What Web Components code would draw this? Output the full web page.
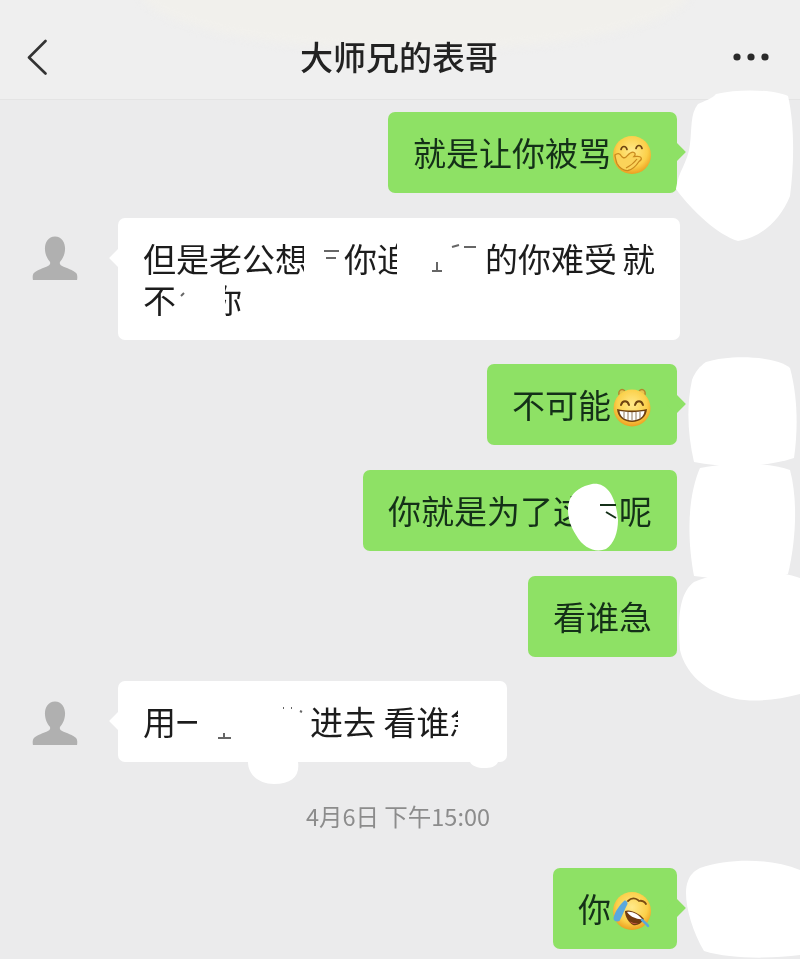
<!DOCTYPE html>
<html lang="zh">
<head>
<meta charset="utf-8">
<title>大师兄的表哥</title>
<style>
  html, body { margin: 0; background: #ebebeb; }
  body { font-family: "Noto Sans CJK SC", "Noto Sans", sans-serif; }
</style>
</head>
<body>
<chat-page>
  <chat-header slot="header">大师兄的表哥</chat-header>

  <chat-row side="right">
    <chat-bubble side="right">就是让你被骂<chat-emoji name="smirk"></chat-emoji></chat-bubble>
  </chat-row>

  <chat-row side="left" avatar-top="17">
    <chat-bubble side="left">但是老公想<span style="display:inline-block;width:36px"></span>你追<span style="display:inline-block;width:75px"></span>的你难受<span style="display:inline-block;width:5px"></span>就<br>不<span style="display:inline-block;width:33px"></span>你</chat-bubble>
  </chat-row>

  <chat-row side="right">
    <chat-bubble side="right">不可能<chat-emoji name="grin"></chat-emoji></chat-bubble>
  </chat-row>

  <chat-row side="right">
    <chat-bubble side="right" notail>你就是为了这<span style="display:inline-block;width:33px"></span>呢</chat-bubble>
  </chat-row>

  <chat-row side="right">
    <chat-bubble side="right" notail>看谁急</chat-bubble>
  </chat-row>

  <chat-row side="left" avatar-top="19">
    <chat-bubble side="left">用一<span style="display:inline-block;width:101px"></span>进去 看谁急</chat-bubble>
  </chat-row>

  <chat-time>4月6日 下午15:00</chat-time>

  <chat-row side="right">
    <chat-bubble side="right">你<chat-emoji name="laugh"></chat-emoji></chat-bubble>
  </chat-row>

  <chat-scribble slot="over"></chat-scribble>
</chat-page>

<script>
class ChatPage extends HTMLElement {
  constructor() {
    super();
    this.attachShadow({ mode: "open" });
    this.shadowRoot.innerHTML = /* html */`
    <style>
      :host {
        display: block;
        position: relative;
        width: 800px;
        height: 959px;
        overflow: hidden;
        background: #ebebec;
      }
      .list {
        display: flex;
        flex-direction: column;
        gap: 24.7px;
        padding-top: 12px;
      }
    </style>
    <slot name="header"></slot>
    <div class="list"><slot></slot></div>
    <slot name="over"></slot>
    `;
  }
}

class ChatHeader extends HTMLElement {
  constructor() {
    super();
    this.attachShadow({ mode: "open" });
    this.shadowRoot.innerHTML = /* html */`
    <style>
      :host {
        display: block;
        position: relative;
        height: 100px;
        box-sizing: border-box;
        border-bottom: 1px solid #e4e4e4;
        background: #efefef;
        overflow: hidden;
      }
      .glow {
        position: absolute;
        left: 140px;
        top: -70px;
        width: 550px;
        height: 120px;
        border-radius: 50%;
        background: #f1f0ec;
        filter: blur(4px);
      }
      .bar {
        position: relative;
        display: flex;
        align-items: center;
        justify-content: space-between;
        height: 100px;
        box-sizing: border-box;
        padding: 14px 31px 0 26px;
      }
      .title {
        position: absolute;
        left: 0;
        right: 2px;
        top: 32px;
        text-align: center;
        font-size: 33px;
        line-height: 48px;
        font-weight: 500;
        color: #222;
        filter: blur(.4px);
      }
      svg { display: block; }
    </style>
    <div class="glow"></div>
    <div class="bar">
      <svg width="22" height="36" viewBox="0 0 22 36"><path d="M19.500 2 3 18.500 19.500 34.500" fill="none" stroke="#333" stroke-width="2.600" stroke-linecap="round" stroke-linejoin="round"/></svg>
      <span class="title"><slot></slot></span>
      <svg width="36" height="8" viewBox="0 0 36 8"><circle cx="4" cy="4" r="3.600" fill="#2a2a2a"/><circle cx="18" cy="4" r="3.600" fill="#2a2a2a"/><circle cx="32" cy="4" r="3.600" fill="#2a2a2a"/></svg>
    </div>
    `;
  }
}

class ChatRow extends HTMLElement {
  constructor() {
    super();
    this.attachShadow({ mode: "open" });
  }

  connectedCallback() {
    const left = this.getAttribute("side") === "left";
    const top = this.getAttribute("avatar-top") || 17;
    this.shadowRoot.innerHTML = /* html */`
    <style>
      :host {
        display: flex;
        justify-content: ${left ? "flex-start" : "flex-end"};
        padding: ${left ? "0 121px 0 32px" : "0 123px 0 0"};
      }
      .avatar {
        flex: none;
        display: block;
        margin: ${top}px 40px 0 0;
        filter: blur(.5px);
      }
    </style>
    ${left ? `<svg class="avatar" width="46" height="47" viewBox="0 0 48 48"><path d="M24 1c7 0 10.500 6 10.500 12.500 0 6-2.500 11-5 13.500-1 1.500-.5 3.500 1.500 4.500 5 2.500 12 4.500 15 7.500 1.500 1.500 1.500 5 1 7.500H1c-.5-2.500-.5-6 1-7.500 3-3 10-5 15-7.500 2-1 2.500-3 1.500-4.500-2.500-2.500-5-7.500-5-13.500C13.500 7 17 1 24 1z" fill="#b0b0b0"/></svg>` : ""}
    <slot></slot>
    `;
  }
}

class ChatBubble extends HTMLElement {
  constructor() {
    super();
    this.attachShadow({ mode: "open" });
    this.shadowRoot.innerHTML = /* html */`
    <style>
      :host {
        display: block;
        position: relative;
        box-sizing: border-box;
        padding: 20px 25px;
        border-radius: 7px;
        font-size: 33px;
        line-height: 41px;
        white-space: nowrap;
      }
      :host([side="right"]) { background: #8ee165; color: #143018; }
      :host([side="left"]) { background: #fff; color: #1c1c1c; }
      .text { display: block; filter: blur(.4px); }
      .tail {
        position: absolute;
        top: 33px;
        width: 14px;
        height: 14px;
        transform: rotate(45deg);
        background: inherit;
      }
      :host([side="right"]) .tail { right: -6px; }
      :host([side="left"]) .tail { left: -6px; }
      :host([notail]) .tail { display: none; }
    </style>
    <span class="tail"></span>
    <span class="text"><slot></slot></span>
    `;
  }
}

class ChatEmoji extends HTMLElement {
  static faces = {
    smirk: /* html */`
      <circle cx="20" cy="20" r="19" fill="url(#g)"/>
      <path d="M9 14.500c1-4 5-4 6 0M24 13.500c1-4 5-4 6 0" fill="none" stroke="#6d4310" stroke-width="1.700" stroke-linecap="round"/>
      <path d="M3 20c2-2 5-2 6 .5 1 2 3 3 5 1.500 3-3 5-6 8-4.500 2 1 1 3 0 4 3 0 6-1 7 1 1 1.500-.5 3-2 4-2 3-6 8-11 9-4 .5-9-3-11-7-1-3-2-7-2-9z" fill="#fbd35a" stroke="#c98a1f" stroke-width="1.300"/>
      <path d="M14 33c4-2 8-5 11-9" fill="none" stroke="#c98a1f" stroke-width="1.200"/>
    `,
    grin: /* html */`
      <path d="M7 8C6 3 10 1 13 4M33 8c1-5-3-7-6-4" fill="#e9c34f" stroke="#b4862a" stroke-width="1.400"/>
      <circle cx="20" cy="21" r="18.500" fill="url(#g)"/>
      <path d="M9 18c1.500-5 6.500-5 8 0M23 18c1.500-5 6.500-5 8 0" fill="none" stroke="#6d4310" stroke-width="2" stroke-linecap="round"/>
      <path d="M5 22c9 2 21 2 30 0-.5 8-7 13-15 13S5.500 30 5 22z" fill="#6d3f0e"/>
      <path d="M7.500 24c8 1.500 17 1.500 25 0-.5 6-6 9.500-12.500 9.500S8 30 7.500 24z" fill="#fff"/>
      <path d="M12 24.500v7M16 25v8M20 25v8.500M24 25v8M28 24.500v7" stroke="#9a8468" stroke-width="1.100"/>
    `,
    laugh: /* html */`
      <circle cx="20" cy="20" r="19" fill="url(#g)"/>
      <path d="M16 10c3-3 7-3 10-1M27 10c3-1 6 1 7 3" fill="none" stroke="#7a4c12" stroke-width="1.800" stroke-linecap="round"/>
      <path d="M13 20c5-2 14 2 19 8-3 5-7 7-11 6-4-2-8-8-8-14z" fill="#713a10"/>
      <path d="M15 21c5-1 11 2 15 7-3 1-12-2-15-7z" fill="#fff"/>
      <path d="M17 30c3 2 7 3 9 2-2 2-6 1-9-2z" fill="#f0665b"/>
      <path d="M12 10C8 14 3 20 1.500 27c-.5 3 3 4 6 3 3-6 5-11 8-17 .5-2-2-4.500-3.500-3z" fill="#5aa8dd"/>
      <path d="M30 29c2 2 5 4 6 6" fill="none" stroke="#5aa8dd" stroke-width="2.500" stroke-linecap="round"/>
    `,
  };

  constructor() {
    super();
    this.attachShadow({ mode: "open" });
  }

  connectedCallback() {
    const face = ChatEmoji.faces[this.getAttribute("name")];
    this.shadowRoot.innerHTML = /* html */`
    <style>
      :host {
        display: inline-block;
        width: 40px;
        height: 30px;
        vertical-align: -4px;
        margin-left: 1px;
      }
      svg { display: block; margin-top: -5px; }
    </style>
    <svg width="40" height="40" viewBox="0 0 40 40">
      <defs>
        <radialGradient id="g" cx=".5" cy=".4" r=".62">
          <stop offset="0" stop-color="#ffe98a"/>
          <stop offset=".65" stop-color="#fbd04a"/>
          <stop offset="1" stop-color="#eb9a1c"/>
        </radialGradient>
      </defs>
      ${face}
    </svg>
    `;
  }
}

class ChatTime extends HTMLElement {
  constructor() {
    super();
    this.attachShadow({ mode: "open" });
    this.shadowRoot.innerHTML = /* html */`
    <style>
      :host {
        display: block;
        margin: 14px 4px 12px 0;
        text-align: center;
        font-size: 23.500px;
        line-height: 30px;
        color: #8c8c8c;
        filter: blur(.3px);
      }
    </style>
    <slot></slot>
    `;
  }
}

// the white scribbles someone painted over the picture
class ChatScribble extends HTMLElement {
  constructor() {
    super();
    this.attachShadow({ mode: "open" });
    this.shadowRoot.innerHTML = /* html */`
    <style>
      :host {
        position: absolute;
        inset: 0;
        pointer-events: none;
      }
      svg { display: block; }
    </style>
    <svg width="800" height="959" viewBox="0 0 800 959">
      <g fill="#fff">
        <path d="M716 94c25-6 60-4 72 2 7 30 6 70 2 100-10 25-30 42-52 45-20-6-46-30-62-52 2-18 12-26 14-45 2-15 0-30 8-40 6-3 14-5 18-10z"/>
        <path d="M706 362c25-8 70-6 84 6 8 30 8 62 4 90-30 10-70 10-100 4-6-26-8-54-2-82 3-8 8-14 14-18z"/>
        <path d="M700 468c30-6 66-6 90 2 8 30 6 70-2 104-28 6-62 6-94 2-6-32-8-76 6-108z"/>
        <path d="M694 582c30-14 80-14 106-4v116c-30 8-62 10-84-2-18-8-32-24-36-42-2-28-2-56 14-68z"/>
        <path d="M700 868c30-10 70-10 100 2v85c-30 4-70 4-96-4-14-24-22-56-16-70 2-6 6-10 12-13z"/>
        <path d="M592 484c16-2 24 14 26 36 0 12-4 24-12 29-10 4-22 0-30-14-8-12-10-26-6-36 4-8 12-13 22-15z"/>
        <path d="M248 762h50c2 14-6 22-24 22-16 0-26-10-26-22z"/>
        <path d="M470 762h28c-2 5-8 6-14 6-6 0-12-2-14-6z"/>

        <!-- cover the half eaten characters in the white bubbles -->
        <rect x="304" y="238" width="20" height="42"/>
        <rect x="397" y="238" width="13" height="42"/>
        <path d="M176 282h49v38h-49z"/>
        <path d="M197 702h20v42h-20z"/>
        <path d="M458 702h30v42h-30z"/>
      </g>
      <!-- what is left of the strokes under the paint -->
      <g stroke="#333" stroke-width="2" fill="none" opacity=".75">
        <path d="M324 251h15M326 258h10"/>
        <path d="M432 271h10M437 262v9M452 247l7-2M464 247h12"/>
        <path d="M181 296l3-3"/>
        <path d="M218 738h13M224 733v5"/>
        <path d="M283 708h1M291 708h1M300 711l2 1"/>
      </g>
      <path d="M600 505h16M606 512l10 6" stroke="#143018" stroke-width="2" fill="none"/>
    </svg>
    `;
  }
}

customElements.define("chat-page", ChatPage);
customElements.define("chat-header", ChatHeader);
customElements.define("chat-row", ChatRow);
customElements.define("chat-bubble", ChatBubble);
customElements.define("chat-emoji", ChatEmoji);
customElements.define("chat-time", ChatTime);
customElements.define("chat-scribble", ChatScribble);
</script>
</body>
</html>
